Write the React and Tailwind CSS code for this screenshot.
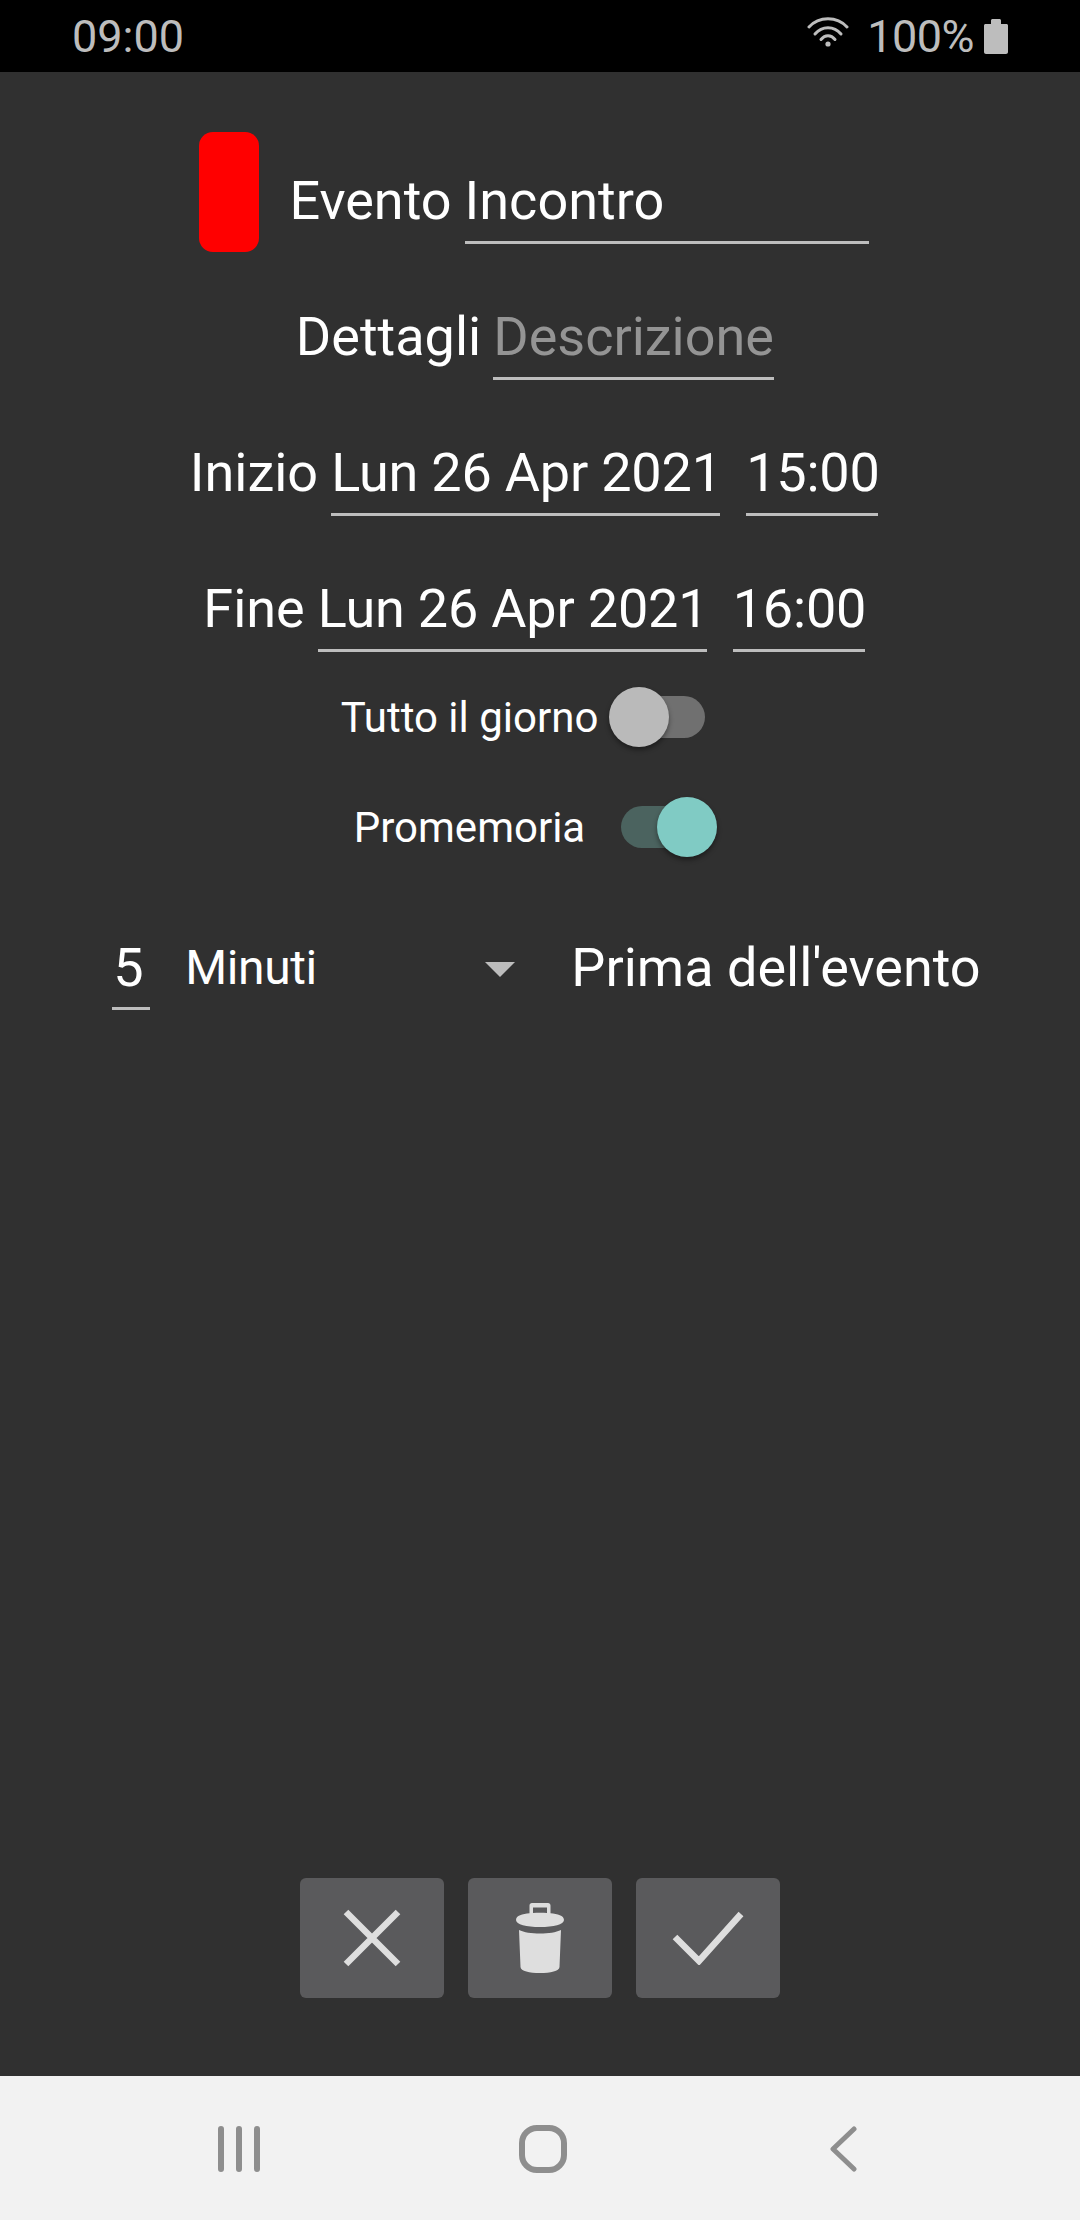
const font = { fontFamily: "Roboto, sans-serif" };

function Field({ children, className = "", muted = false }) {
  return (
    <div className={`h-[71px] border-b-[3px] border-[#bdbdbd] text-[54px] leading-[56px] whitespace-nowrap ${muted ? "text-[#949494]" : "text-white"} ${className}`}>
      {children}
    </div>
  );
}

function Label({ children, className = "" }) {
  return <div className={`h-[64px] text-[54px] leading-[56px] text-white whitespace-nowrap ${className}`}>{children}</div>;
}

function Toggle({ on }) {
  return (
    <div className="relative w-[108px] h-[62px] flex items-center">
      <div className={`w-[84px] h-[42px] rounded-full ml-[12px] ${on ? "bg-[#4b635f]" : "bg-[#707070]"}`} />
      <div className={`absolute top-px w-[60px] h-[60px] rounded-full shadow-[0_3px_5px_rgba(0,0,0,0.4)] ${on ? "left-[48px] bg-[#80cbc4]" : "left-0 bg-[#bababa]"}`} />
    </div>
  );
}

function ActionButton({ children }) {
  return <div className="w-[144px] h-[120px] rounded-[6px] bg-[#5a5a5c] flex items-center justify-center">{children}</div>;
}

export default function App() {
  return (
    <div className="w-[1080px] h-[2220px] flex flex-col bg-[#303030]" style={font}>
      <div className="h-[72px] bg-black flex items-center text-[#bdbdbd] text-[45px] pl-[72px] pr-[72px] shrink-0">
        <span className="leading-[72px] flex-1 pt-[2px]">09:00</span>
        <svg width="42" height="30" viewBox="0 0 42 30" className="mb-[8px]" fill="none" stroke="#bdbdbd" strokeWidth="3" strokeLinecap="round">
          <path d="M2 10C12 -1 30 -1 40 10" />
          <path d="M8 17C15 8.500 27 8.500 34 17" />
          <path d="M14 22.500C18 17.500 24 17.500 28 22.500" />
          <circle cx="21" cy="27" r="2.600" fill="#bdbdbd" stroke="none" />
        </svg>
        <span className="leading-[72px] ml-[18px] pt-[2px] tracking-[-0.5px]">100%</span>
        <svg width="24" height="35" viewBox="0 0 24 35" className="ml-[10px]" fill="#bdbdbd">
          <path d="M7 1.5C7 .7 7.7 0 8.5 0h7c.8 0 1.500.7 1.500 1.500V5h5.500C23.300 5 24 5.700 24 6.500V33c0 1.100-.9 2-2 2H2c-1.100 0-2-.9-2-2V6.500C0 5.700.7 5 1.500 5H7z" />
        </svg>
      </div>

      <div className="flex-1 flex flex-col items-center pr-[12px]">
        <div className="flex items-start mt-[60px] h-[120px]">
          <div className="w-[60px] h-[120px] rounded-[14px] bg-[#ff0000]" />
          <Label className="ml-[30px] mt-[41px]">Evento </Label>
          <Field className="w-[404px] mt-[41px] ml-[13px]">Incontro</Field>
        </div>

        <div className="flex mt-[57px] ml-[2px]">
          <Label>Dettagli</Label>
          <Field muted className="ml-[12px] w-[281px]">Descrizione</Field>
        </div>

        <div className="flex mt-[65px]">
          <Label>Inizio</Label>
          <Field className="ml-[13px] w-[389px] tracking-[-0.2px]">Lun 26 Apr 2021</Field>
          <Field className="ml-[26px] w-[132px] tracking-[-0.2px]">15:00</Field>
        </div>

        <div className="flex mt-[65px]">
          <Label>Fine</Label>
          <Field className="ml-[13px] w-[389px] tracking-[-0.2px]">Lun 26 Apr 2021</Field>
          <Field className="ml-[26px] w-[132px] tracking-[-0.2px]">16:00</Field>
        </div>

        <div className="flex items-center mt-[34px] text-[42px] text-white h-[62px] mr-[10px]">
          <span className="mr-[11px]">Tutto il giorno</span>
          <Toggle on={false} />
        </div>

        <div className="flex items-center mt-[48px] text-[42px] text-white h-[62px] ml-[3px]">
          <span className="mr-[24px]">Promemoria</span>
          <Toggle on />
        </div>

        <div className="flex mt-[81px] ml-[25px] items-start">
          <Field className="w-[38px] text-left pl-[1px] pt-[1px]">5</Field>
          <div className="h-[64px] ml-[35px] w-[330px] flex items-center text-[48px] leading-[56px] tracking-[-0.4px] text-white pb-[6px] relative">
            Minuti
            <svg width="30" height="15" viewBox="0 0 30 15" className="absolute right-0 top-[23px]"><path d="M0 0h30L15 15z" fill="#bdbdbd" /></svg>
          </div>
          <Label className="ml-[56px] pt-[1px]">Prima dell'evento</Label>
        </div>

        <div className="flex gap-[24px] mt-auto mb-[78px] ml-[12px]">
          <ActionButton>
            <svg width="58" height="58" viewBox="0 0 58 58" fill="none" stroke="#dedede" strokeWidth="6.500"><path d="M3 3l52 52M55 3L3 55" /></svg>
          </ActionButton>
          <ActionButton>
            <svg width="48" height="70" viewBox="0 0 48 70" fill="#dedede">
              <path fillRule="evenodd" d="M16 0h16c1.500 0 2.500 1 2.500 2.500V10.300C41.500 11 48 12.500 48 17c0 4.500-10.500 7-24 7S0 21.500 0 17c0-4.500 6.500-6 13.500-6.700V2.500C13.500 1 14.500 0 16 0zm1 4.500v5.400c2.200-.1 4.500-.2 7-.2s4.800.1 7 .2V4.500z" />
              <path d="M3 27c5 2.500 12.500 3.500 21 3.500S40 29.500 45 27l-1.500 37c-.2 4-9 6-19.500 6S4.700 68 4.500 64z" />
            </svg>
          </ActionButton>
          <ActionButton>
            <svg width="72" height="54" viewBox="0 0 72 54" fill="none" stroke="#dedede" strokeWidth="6.500"><path d="M3 26l24 24L69 3" /></svg>
          </ActionButton>
        </div>
      </div>

      <div className="h-[144px] bg-[#f2f2f2] shrink-0 flex items-center justify-between pl-[218px] pr-[223px]">
        <svg width="42" height="46" viewBox="0 0 42 46" className="mt-[2px]" fill="none" stroke="#8e8e8e" strokeWidth="6" strokeLinecap="round">
          <path d="M3 3v40M21 3v40M39 3v40" />
        </svg>
        <svg width="48" height="48" viewBox="0 0 48 48" className="mr-[3px] mt-[2px]" fill="none" stroke="#8e8e8e" strokeWidth="6">
          <rect x="3" y="3" width="42" height="42" rx="15" />
        </svg>
        <svg width="28" height="46" viewBox="0 0 28 46" className="mt-[2px]" fill="none" stroke="#8e8e8e" strokeWidth="5" strokeLinecap="round" strokeLinejoin="round">
          <path d="M25 3L4 23 25 43" />
        </svg>
      </div>
    </div>
  );
}
